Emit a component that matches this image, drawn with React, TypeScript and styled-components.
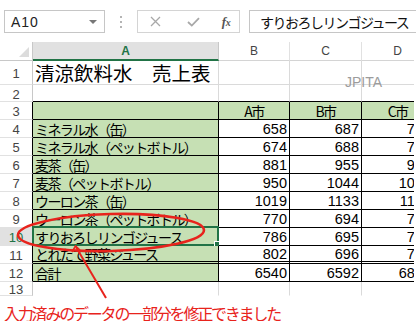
import React from "react";
import styled, { createGlobalStyle } from "styled-components";

const JP = `"Noto Sans CJK JP", "Noto Sans", sans-serif`;
const LAT = `"Liberation Sans", Arial, sans-serif`;
const GRID = "#dadada";
const GREEN_FILL = "#c6e0b4";
const XL_GREEN = "#217346";
const RED = "#e8231c";

const GlobalStyle = createGlobalStyle`
  html, body { margin: 0; padding: 0; background: #fff; }
  body { width: 416px; height: 321px; overflow: hidden; font-family: ${JP}; }
`;

const Page = styled.div`
  position: relative;
  width: 416px;
  height: 321px;
  overflow: hidden;
  background: #fff;
`;

const Toolbar = styled.div`
  display: flex;
  align-items: flex-start;
  height: 42px;
  padding: 10px 0 0 4px;
  box-sizing: border-box;
  & > * { flex-shrink: 0; }
`;

const NameBox = styled.div`
  width: 101px;
  height: 23px;
  box-sizing: border-box;
  border: 1px solid #c6c6c6;
  display: flex;
  align-items: center;
  justify-content: space-between;
  padding: 0 7px 0 6px;
  font: 14px ${LAT};
  letter-spacing: 1px;
  color: #222;
`;

const Caret = styled.span`
  width: 0;
  height: 0;
  border-left: 4px solid transparent;
  border-right: 4px solid transparent;
  border-top: 4px solid #777;
`;

const Grip = styled.div`
  width: 32px;
  height: 23px;
  display: flex;
  flex-direction: column;
  align-items: center;
  justify-content: center;
  gap: 3px;
`;

const GripDot = styled.span`
  width: 2px;
  height: 2px;
  background: #b4b4b4;
`;

const FxBox = styled.div`
  width: 103px;
  height: 23px;
  box-sizing: border-box;
  border: 1px solid #d4d4d4;
  display: grid;
  grid-template-columns: 35px 40px 1fr;
  align-items: center;
  justify-items: center;
`;

const FxLabel = styled.span`
  font: italic bold 13px "Liberation Serif", serif;
  color: #555;
  letter-spacing: -0.5px;
  & small { font-size: 10px; }
`;

const FormulaInput = styled.div`
  margin-left: 9px;
  width: 200px;
  height: 23px;
  box-sizing: border-box;
  border: 1px solid #c6c6c6;
  border-right: none;
  display: flex;
  align-items: center;
  padding-left: 10px;
  font: 14px ${JP};
  letter-spacing: -1.5px;
  white-space: nowrap;
  overflow: hidden;
  color: #111;
`;

const Viewport = styled.div`
  width: 414px;
  overflow: hidden;
`;

const Sheet = styled.div`
  display: grid;
  grid-template-columns: 33px 186px 71px 72px 72px;
  grid-template-rows: 19px 24px 17px repeat(10, 18px) 14px;
  width: 434px;
`;

const Corner = styled.div`
  position: relative;
  border-right: 1px solid #c8c8c8;
  border-bottom: 1px solid #c8c8c8;
  box-sizing: border-box;
  &::after {
    content: "";
    position: absolute;
    right: 3px;
    bottom: 3px;
    width: 0;
    height: 0;
    border-left: 10px solid transparent;
    border-bottom: 10px solid #dcdcdc;
  }
`;

const ColHeader = styled.div<{ $active?: boolean }>`
  box-sizing: border-box;
  display: flex;
  align-items: center;
  justify-content: center;
  font: ${(p) => (p.$active ? "bold" : "normal")} 12px ${LAT};
  color: ${(p) => (p.$active ? XL_GREEN : "#444")};
  background: ${(p) => (p.$active ? "#e1e1e1" : "#fff")};
  border-right: 1px solid ${(p) => (p.$active ? "#c8c8c8" : "#e1e1e1")};
  border-bottom: ${(p) => (p.$active ? `2px solid ${XL_GREEN}` : "1px solid #d4d4d4")};
`;

const RowHeader = styled.div<{ $active?: boolean; $edge?: string }>`
  box-sizing: border-box;
  display: flex;
  align-items: center;
  justify-content: center;
  padding-top: 2px;
  font: 13px ${LAT};
  color: ${(p) => (p.$active ? XL_GREEN : "#444")};
  background: ${(p) => (p.$active ? "#e1e1e1" : "#fff")};
  border-right: 1px solid ${(p) => (p.$active ? XL_GREEN : p.$edge || "#c8c8c8")};
  border-bottom: 1px solid #e1e1e1;
`;

const Cell = styled.div<{
  $fill?: boolean;
  $align?: "left" | "right" | "center";
  $right?: string;
  $bottom?: string;
  $double?: boolean;
  $num?: boolean;
}>`
  position: relative;
  box-sizing: border-box;
  display: flex;
  align-items: center;
  justify-content: ${(p) =>
    p.$align === "right" ? "flex-end" : p.$align === "center" ? "center" : "flex-start"};
  padding: 1px 2px 0 2px;
  white-space: nowrap;
  overflow: visible;
  background: ${(p) => (p.$fill ? GREEN_FILL : "#fff")};
  border-right: 1px solid ${(p) => p.$right || GRID};
  border-bottom: ${(p) =>
    p.$double ? "3px double #000" : `1px solid ${p.$bottom || GRID}`};
  font: ${(p) => (p.$num ? `14.5px ${LAT}` : `14px ${JP}`)};
  letter-spacing: ${(p) => (p.$num ? "0" : "-1.6px")};
  color: #000;
`;

const TitleCell = styled(Cell)`
  align-items: flex-end;
  padding-bottom: 0;
  font: 19.5px ${JP};
  letter-spacing: 0;
  line-height: 23px;
`;

const ActiveFrame = styled.div`
  position: absolute;
  left: -1px;
  top: -2px;
  right: -1px;
  bottom: -1px;
  border: 2px solid ${XL_GREEN};
  pointer-events: none;
`;

const FillHandle = styled.div`
  position: absolute;
  right: -4px;
  bottom: -4px;
  width: 5px;
  height: 5px;
  background: ${XL_GREEN};
  border: 1px solid #fff;
`;

const Watermark = styled.div`
  position: absolute;
  left: 345px;
  top: 74px;
  font: 14px ${LAT};
  color: #9c9c9c;
`;

const Overlay = styled.svg`
  position: absolute;
  left: 0;
  top: 0;
  pointer-events: none;
`;

const Caption = styled.div`
  padding: 7px 0 0 4px;
  font: 16px ${JP};
  letter-spacing: -2.2px;
  line-height: 20px;
  color: ${RED};
  white-space: nowrap;
`;

type Row = { label: string; vals: (string | number)[]; head?: boolean };

const rows: Row[] = [
  { label: "", vals: ["A市", "B市", "C市"], head: true },
  { label: "ミネラル水（缶）", vals: [658, 687, 712] },
  { label: "ミネラル水（ペットボトル）", vals: [674, 688, 705] },
  { label: "麦茶（缶）", vals: [881, 955, 921] },
  { label: "麦茶（ペットボトル）", vals: [950, 1044, 1076] },
  { label: "ウーロン茶（缶）", vals: [1019, 1133, 1150] },
  { label: "ウーロン茶（ペットボトル）", vals: [770, 694, 718] },
  { label: "すりおろしリンゴジュース", vals: [786, 695, 720] },
  { label: "とれたて野菜ジュース", vals: [802, 696, 725] },
  { label: "合計", vals: [6540, 6592, 6827] },
];

const XIcon = () => (
  <svg width="11" height="11" viewBox="0 0 11 11">
    <path d="M1 1 L10 10 M10 1 L1 10" stroke="#a8a8a8" strokeWidth="1.3" fill="none" />
  </svg>
);

const CheckIcon = () => (
  <svg width="13" height="10" viewBox="0 0 13 10">
    <path d="M1 5 L4.8 8.6 L12 1.2" stroke="#a8a8a8" strokeWidth="1.8" fill="none" />
  </svg>
);

export default function App() {
  return (
    <Page>
      <GlobalStyle />
      <Toolbar>
        <NameBox>
          <span>A10</span>
          <Caret />
        </NameBox>
        <Grip>
          <GripDot />
          <GripDot />
          <GripDot />
        </Grip>
        <FxBox>
          <XIcon />
          <CheckIcon />
          <FxLabel>
            f<small>x</small>
          </FxLabel>
        </FxBox>
        <FormulaInput>すりおろしリンゴジュース</FormulaInput>
      </Toolbar>

      <Viewport>
        <Sheet>
          <Corner />
          <ColHeader $active>A</ColHeader>
          <ColHeader>B</ColHeader>
          <ColHeader>C</ColHeader>
          <ColHeader>D</ColHeader>

          <RowHeader>1</RowHeader>
          <TitleCell>清涼飲料水　売上表</TitleCell>
          <Cell />
          <Cell />
          <Cell />

          <RowHeader>2</RowHeader>
          <Cell $bottom="#000" />
          <Cell $bottom="#000" />
          <Cell $bottom="#000" />
          <Cell $bottom="#000" />

          {rows.map((r, i) => {
            const rowNo = i + 3;
            const active = rowNo === 10;
            const dbl = rowNo === 11;
            return (
              <React.Fragment key={rowNo}>
                <RowHeader $active={active} $edge="#000">
                  {rowNo}
                </RowHeader>
                <Cell $fill $right="#000" $bottom="#000" $double={dbl}>
                  {r.label}
                  {active && (
                    <ActiveFrame>
                      <FillHandle />
                    </ActiveFrame>
                  )}
                </Cell>
                {r.vals.map((v, j) => (
                  <Cell
                    key={j}
                    $fill={r.head}
                    $align={r.head ? "center" : "right"}
                    $num={!r.head}
                    $right="#000"
                    $bottom="#000"
                    $double={dbl}
                  >
                    {v}
                  </Cell>
                ))}
              </React.Fragment>
            );
          })}

          <RowHeader>13</RowHeader>
          <Cell $bottom="transparent" />
          <Cell $bottom="transparent" />
          <Cell $bottom="transparent" />
          <Cell $bottom="transparent" />
        </Sheet>
      </Viewport>

      <Caption>入力済みのデータの一部分を修正できました</Caption>

      <Watermark>JPITA</Watermark>

      <Overlay width="416" height="321" viewBox="0 0 416 321">
        <ellipse
          cx="111"
          cy="232.5"
          rx="93"
          ry="18.5"
          transform="rotate(-1.5 111 232.5)"
          stroke={RED}
          strokeWidth="2.6"
          fill="none"
        />
        <path d="M76 247 L106 298" stroke={RED} strokeWidth="2" fill="none" />
        <path d="M72 252 L75.5 246 L80 250" stroke={RED} strokeWidth="1.6" fill="none" />
      </Overlay>
    </Page>
  );
}
